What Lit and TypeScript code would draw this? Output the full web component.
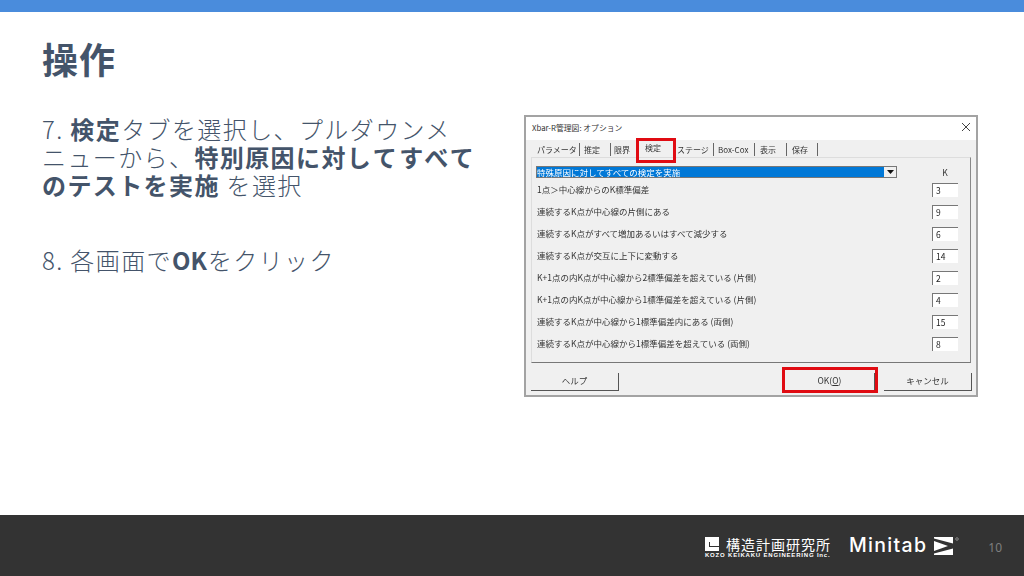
import { LitElement, html, css } from 'lit';
import { customElement } from 'lit/decorators.js';

// width of each tab cell and the left inset of its label, read off the reference
const TABS = [
  { label: 'パラメータ', width: 44, pad: 1, sep: true },
  { label: '推定', width: 31, pad: 4, sep: true },
  { label: '限界', width: 29, pad: 3, sep: false },
  { label: '検定', width: 33, pad: 5, sep: false, active: true },
  { label: 'ステージ', width: 41, pad: 4, sep: true },
  { label: 'Box-Cox', width: 41, pad: 4, sep: true },
  { label: '表示', width: 32, pad: 5, sep: true },
  { label: '保存', width: 31, pad: 5, sep: true },
];

const TESTS: [string, string][] = [
  ['1点＞中心線からのK標準偏差', '3'],
  ['連続するK点が中心線の片側にある', '9'],
  ['連続するK点がすべて増加あるいはすべて減少する', '6'],
  ['連続するK点が交互に上下に変動する', '14'],
  ['K+1点の内K点が中心線から2標準偏差を超えている (片側)', '2'],
  ['K+1点の内K点が中心線から1標準偏差を超えている (片側)', '4'],
  ['連続するK点が中心線から1標準偏差内にある (両側)', '15'],
  ['連続するK点が中心線から1標準偏差を超えている (両側)', '8'],
];

@customElement('option-dialog')
export class OptionDialog extends LitElement {
  static styles = css`
    :host {
      display: block;
      position: relative;
      width: 454px;
      height: 282px;
      box-sizing: border-box;
      border: 2px solid #a3a3a3;
      background: #f0f0f0;
      font-family: 'Noto Sans CJK JP', 'Liberation Sans', sans-serif;
      font-size: 8.5px;
      color: #333;
    }
    .inner { height: 100%; display: flex; flex-direction: column; filter: blur(0.35px); }
    .title {
      height: 23px;
      flex: none;
      box-sizing: border-box;
      padding: 0 4px 3px 6px;
      display: flex;
      align-items: center;
      justify-content: space-between;
      background: #fff;
      font-size: 7.8px;
    }
    .tabs {
      height: 15px;
      margin-top: 2px;
      padding-left: 10px;
      flex: none;
      display: flex;
      align-items: center;
      font-size: 8px;
    }
    .tab { box-sizing: border-box; line-height: 13px; height: 13px; white-space: nowrap; }
    .tab.sep { border-right: 1px solid #666; }
    .tab.active { margin-top: -4px; }
    .panel {
      flex: none;
      height: 206px;
      margin: 0 5px;
      box-sizing: border-box;
      border-right: 1px solid #888;
      border-bottom: 1px solid #777;
      border-top: 1px solid #ddd;
      border-left: 1px solid #ddd;
      padding: 7px 12px 0 4px;
    }
    .combo-row { display: flex; align-items: center; justify-content: space-between; height: 13px; margin-bottom: 1px; }
    .combo {
      width: 361px;
      height: 12px;
      display: flex;
      background: #0078d7;
      color: #fff;
      border: 1px solid #777;
      box-sizing: border-box;
      line-height: 10px;
      justify-content: space-between;
      white-space: nowrap;
    }
    .arrow {
      width: 12px;
      background: #f0f0f0;
      display: flex;
      align-items: center;
      justify-content: center;
    }
    .k { width: 26px; text-align: center; }
    .row { display: flex; justify-content: space-between; align-items: center; height: 22px; padding-left: 1px; white-space: nowrap; }
    .row .label { margin-top: -2px; }
    .field {
      width: 26px;
      height: 14px;
      box-sizing: border-box;
      background: #fff;
      border-top: 1px solid #777;
      border-left: 1px solid #777;
      padding-left: 3px;
      line-height: 13px;
      color: #222;
    }
    .buttons { display: flex; margin: 10px 0 0 5px; }
    .btn {
      height: 18px;
      box-sizing: border-box;
      padding-bottom: 3px;
      display: flex;
      align-items: center;
      justify-content: center;
      border-right: 1px solid #555;
      border-bottom: 1px solid #555;
    }
    .help { width: 88px; margin-right: 166px; }
    .ok { width: 90px; margin-right: 9px; }
    .cancel { width: 88px; }
    .mark { position: absolute; border: 3px solid #e00b12; box-sizing: border-box; }
    .mark.tab-mark { left: 110px; top: 21px; width: 40px; height: 25px; }
    .mark.ok-mark { left: 256px; top: 250px; width: 96px; height: 26px; }
  `;

  render() {
    return html`
      <div class="inner">
        <div class="title">
          <span>Xbar-R管理図: オプション</span>
          <svg width="12" height="12" viewBox="0 0 12 12"><path d="M2 2l8 8M10 2l-8 8" stroke="#444" fill="none"/></svg>
        </div>
        <div class="tabs">
          ${TABS.map(
            (t) => html`<span
              class="tab ${t.sep ? 'sep' : ''} ${t.active ? 'active' : ''}"
              style="width:${t.width}px;padding-left:${t.pad}px"
              >${t.label}</span
            >`
          )}
        </div>
        <div class="panel">
          <div class="combo-row">
            <div class="combo">
              <span>特殊原因に対してすべての検定を実施</span>
              <span class="arrow"><svg width="7" height="4" viewBox="0 0 7 4"><path d="M0 0h7L3.5 4z" fill="#111"/></svg></span>
            </div>
            <span class="k">K</span>
          </div>
          ${TESTS.map(
            ([label, value]) =>
              html`<div class="row"><span class="label">${label}</span><span class="field">${value}</span></div>`
          )}
        </div>
        <div class="buttons">
          <div class="btn help">ヘルプ</div>
          <div class="btn ok"><span>OK(<u>O</u>)</span></div>
          <div class="btn cancel">キャンセル</div>
        </div>
      </div>
      <div class="mark tab-mark"></div>
      <div class="mark ok-mark"></div>
    `;
  }
}

@customElement('app-root')
export class AppRoot extends LitElement {
  static styles = css`
    :host {
      display: flex;
      flex-direction: column;
      width: 1024px;
      height: 576px;
      overflow: hidden;
      background: #fff;
      font-family: 'Noto Sans CJK JP', 'Noto Sans', sans-serif;
      color: #44546a;
    }
    .topbar { height: 12px; flex: none; background: #4a8cdc; }
    main { flex: 1; min-height: 0; padding: 0 46px 0 42px; }
    h1 { margin: 20px 0 0; font-size: 36px; line-height: 52px; font-weight: 700; letter-spacing: 1px; }
    .content { display: flex; justify-content: space-between; margin-top: 31px; }
    .text { font-size: 24px; line-height: 28px; font-weight: 300; letter-spacing: 1.4px; white-space: nowrap; }
    .text p { margin: 0; }
    .text p + p { margin-top: 47px; }
    b { font-weight: 700; }
    b.wide { letter-spacing: 2.6px; }
    b.tight { letter-spacing: 0; margin-right: 1px; }
    footer {
      height: 61px;
      flex: none;
      box-sizing: border-box;
      padding: 4px 22px 0 0;
      background: #333;
      display: flex;
      align-items: center;
      justify-content: flex-end;
      color: #fff;
    }
    .kke { display: flex; flex-direction: column; margin-right: 18px; }
    .kke-top { display: flex; align-items: center; gap: 7px; height: 15px; }
    .kke-name { font-size: 14px; line-height: 15px; letter-spacing: 1px; font-weight: 400; white-space: nowrap; }
    .kke-en { font-family: 'Liberation Sans', sans-serif; font-size: 6px; line-height: 7px; font-weight: 700; letter-spacing: 0.81px; white-space: nowrap; }
    .minitab { font-family: 'Inter', sans-serif; font-size: 19.5px; font-weight: 500; letter-spacing: 1.3px; margin: 0 7px 6px 0; }
    .mark-logo { margin-bottom: 4px; }
    .num { font-family: 'Noto Sans', sans-serif; font-size: 12px; color: #7f7f7f; margin-left: 28px; }
  `;

  render() {
    return html`
      <div class="topbar"></div>
      <main>
        <h1>操作</h1>
        <div class="content">
          <div class="text">
            <p>7. <b>検定</b>タブを選択し、プルダウンメ<br />ニューから、<b>特別原因に対</b><b class="wide">してすべて</b><br /><b>のテストを実施</b> を選択</p>
            <p>8. 各画面で<b class="tight">OK</b>をクリック</p>
          </div>
          <option-dialog></option-dialog>
        </div>
      </main>
      <footer>
        <div class="kke">
          <div class="kke-top">
            <svg width="14" height="14" viewBox="0 0 14 14"><path d="M0 0h14v14H0z" fill="#fff"/><path d="M4 5h1v4h9v1H4z" fill="#333"/></svg>
            <span class="kke-name">構造計画研究所</span>
          </div>
          <span class="kke-en">KOZO KEIKAKU ENGINEERING Inc.</span>
        </div>
        <span class="minitab">Minitab</span>
        <svg class="mark-logo" width="26" height="18" viewBox="0 0 26 18">
          <path d="M0 0h19v6.5L0 1.5zM0 4l14 5L0 14zM0 18h19v-6.5L0 16.5z" fill="#fff"/>
          <circle cx="23" cy="2" r="1.3" fill="none" stroke="#bbb" stroke-width=".6"/>
        </svg>
        <span class="num">10</span>
      </footer>
    `;
  }
}
